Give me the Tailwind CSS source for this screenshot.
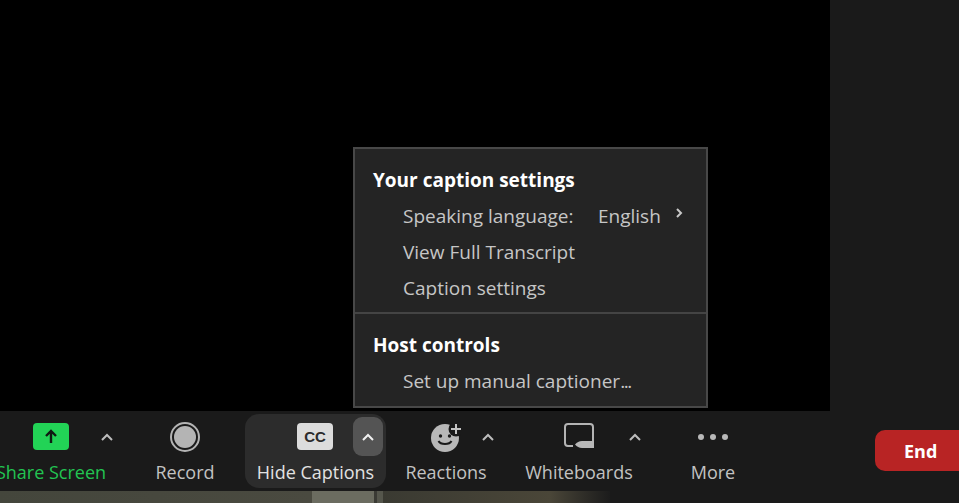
<!DOCTYPE html>
<html>
<head>
<meta charset="utf-8">
<script src="https://cdn.jsdelivr.net/npm/@tailwindcss/browser@4"></script>
</head>
<body class="bg-[#1a1a1a] overflow-hidden">
<div class="w-[959px] h-[503px] flex flex-col overflow-hidden font-['Open_Sans','Noto_Sans',sans-serif] text-[18px] leading-[24px] text-[#c2c2c2]">
  <div class="h-[411px] flex shrink-0">
    <div class="w-[830px] bg-black relative">
      <div class="absolute left-[353px] top-[147px] w-[355px] h-[261px] bg-[#242424] border-2 border-[#484848] pt-[13px] flex flex-col text-[19px] text-[#c6c6c6]">
        <div class="h-[36px] flex items-center pl-[18px] font-bold text-white">Your caption settings</div>
        <div class="h-[36px] flex items-center pl-[48px]">
          <span class="w-[195px] whitespace-nowrap">Speaking language:</span><span>English</span>
          <svg class="ml-[14px] mb-[6px]" width="8" height="12" viewBox="0 0 8 12" fill="none" stroke="#c8c8c8" stroke-width="2"><path d="M2 2l4 4-4 4"/></svg>
        </div>
        <div class="h-[36px] flex items-center pl-[48px]">View Full Transcript</div>
        <div class="h-[36px] flex items-center pl-[48px]">Caption settings</div>
        <div class="h-[2px] bg-[#444444] mt-[6px] mb-[13px]"></div>
        <div class="h-[36px] flex items-center pl-[18px] font-bold text-white">Host controls</div>
        <div class="h-[36px] flex items-center pl-[48px] whitespace-pre">Set up manual captioner<span class="tracking-[-1.4px]">...</span></div>
      </div>
    </div>
    <div class="flex-1 bg-[#1a1a1a]"></div>
  </div>

  <div class="h-[80px] shrink-0 bg-[#1a1a1a] flex items-start font-medium">
    <div class="w-[102px] h-[80px] flex flex-col items-center pt-[12px]">
      <div class="w-[36px] h-[27px] rounded-[4px] bg-[#22d356] flex items-center justify-center">
        <svg width="14" height="15" viewBox="0 0 14 15" fill="none" stroke="#0f1a12" stroke-width="2.4"><path d="M7 14V2M2 7l5-5 5 5"/></svg>
      </div>
      <span class="mt-[10px] whitespace-nowrap text-[#22c452]">Share Screen</span>
    </div>
    <svg class="ml-[-1px] mt-[22px] shrink-0" width="12" height="8" viewBox="0 0 12 8" fill="none" stroke="#bdbdbd" stroke-width="2"><path d="M1 7l5-5 5 5"/></svg>

    <div class="ml-[42px] w-[60px] h-[80px] flex flex-col items-center pt-[11px] shrink-0">
      <svg width="30" height="30" viewBox="0 0 30 30"><circle cx="15" cy="15" r="14" fill="none" stroke="#b4b4b4" stroke-width="2"/><circle cx="15" cy="15" r="11" fill="#b4b4b4"/></svg>
      <span class="mt-[8px] whitespace-nowrap">Record</span>
    </div>

    <div class="ml-[30px] mt-[3px] w-[141px] h-[74px] rounded-[14px] bg-[#2c2c2c] relative flex flex-col items-center pt-[9px] shrink-0">
      <div class="w-[36px] h-[27px] mr-[1px] rounded-[4px] bg-[#dcdcdc] flex items-center justify-center text-[#2b2b2b] text-[15px] font-bold font-['Liberation_Sans',sans-serif]">CC</div>
      <span class="mt-[10px] whitespace-nowrap text-[#e2e2e2]">Hide Captions</span>
      <div class="absolute right-[3px] top-[3px] w-[30px] h-[39px] rounded-[9px] bg-[#545454] flex items-center justify-center">
        <svg width="12" height="8" viewBox="0 0 12 8" fill="none" stroke="#f0f0f0" stroke-width="2"><path d="M1 7l5-5 5 5"/></svg>
      </div>
    </div>

    <div class="ml-[20px] w-[80px] h-[80px] flex flex-col items-center pt-[12px] shrink-0">
      <svg width="32" height="29" viewBox="0 0 32 29">
        <circle cx="15" cy="15" r="14" fill="#b8b8b8"/>
        <circle cx="26" cy="6" r="7.5" fill="#1a1a1a"/>
        <path d="M26 1v10M21 6h10" stroke="#c4c4c4" stroke-width="2"/>
        <circle cx="10.5" cy="13" r="1.7" fill="#1a1a1a"/><circle cx="19.5" cy="13" r="1.7" fill="#1a1a1a"/>
        <path d="M8.500 18c2 4 11 4 13 0" fill="none" stroke="#1a1a1a" stroke-width="2"/>
      </svg>
      <span class="mt-[8px] whitespace-nowrap">Reactions</span>
    </div>
    <svg class="ml-[-4px] mt-[22px] shrink-0" width="12" height="8" viewBox="0 0 12 8" fill="none" stroke="#bdbdbd" stroke-width="2"><path d="M1 7l5-5 5 5"/></svg>

    <div class="ml-[32px] w-[106px] h-[80px] flex flex-col items-center pt-[12px] shrink-0">
      <svg width="32" height="28" viewBox="0 0 32 28">
        <path d="M10 23H5a3 3 0 0 1-3-3V4a3 3 0 0 1 3-3h22a3 3 0 0 1 3 3v14" fill="none" stroke="#b4b4b4" stroke-width="2"/>
        <path d="M12 21.500c2-2 4-3.500 7-3.500h12v7H19c-3 0-5-1.500-7-3.500z" fill="#b8b8b8"/>
      </svg>
      <span class="mt-[9px] whitespace-nowrap">Whiteboards</span>
    </div>
    <svg class="ml-[-3px] mt-[22px] shrink-0" width="12" height="8" viewBox="0 0 12 8" fill="none" stroke="#bdbdbd" stroke-width="2"><path d="M1 7l5-5 5 5"/></svg>

    <div class="ml-[49px] w-[46px] h-[80px] flex flex-col items-center pt-[23px] shrink-0">
      <div class="flex gap-[6px]">
        <span class="w-[6px] h-[6px] rounded-full bg-[#b8b8b8]"></span>
        <span class="w-[6px] h-[6px] rounded-full bg-[#b8b8b8]"></span>
        <span class="w-[6px] h-[6px] rounded-full bg-[#b8b8b8]"></span>
      </div>
      <span class="mt-[20px] whitespace-nowrap">More</span>
    </div>

    <div class="ml-[139px] mt-[19px] w-[100px] h-[41px] shrink-0 rounded-[10px] bg-[#b82424] text-white text-[18px] font-bold flex items-center pl-[29px]">End</div>
  </div>

  <div class="h-[12px] flex shrink-0 relative overflow-hidden">
    <div class="w-[312px] bg-gradient-to-r from-[#44463c] to-[#4a4a40]"></div>
    <div class="w-[62px] bg-[#6b6c60]"></div>
    <div class="w-[3px] bg-[#3a3a34]"></div>
    <div class="w-[6px] bg-[#55564c]"></div>
    <div class="w-[167px] bg-gradient-to-r from-[#3a3a32] to-[#4a4638]"></div>
    <div class="w-[60px] bg-gradient-to-r from-[#4a4638] to-[#1c1c1c]"></div>
    <div class="flex-1 bg-[#1a1a1a] pl-[213px] pt-[7px] text-[#e8e8e8] text-[15px] leading-[20px] whitespace-nowrap">4:00 PM</div>
  </div>
</div>
</body>
</html>
